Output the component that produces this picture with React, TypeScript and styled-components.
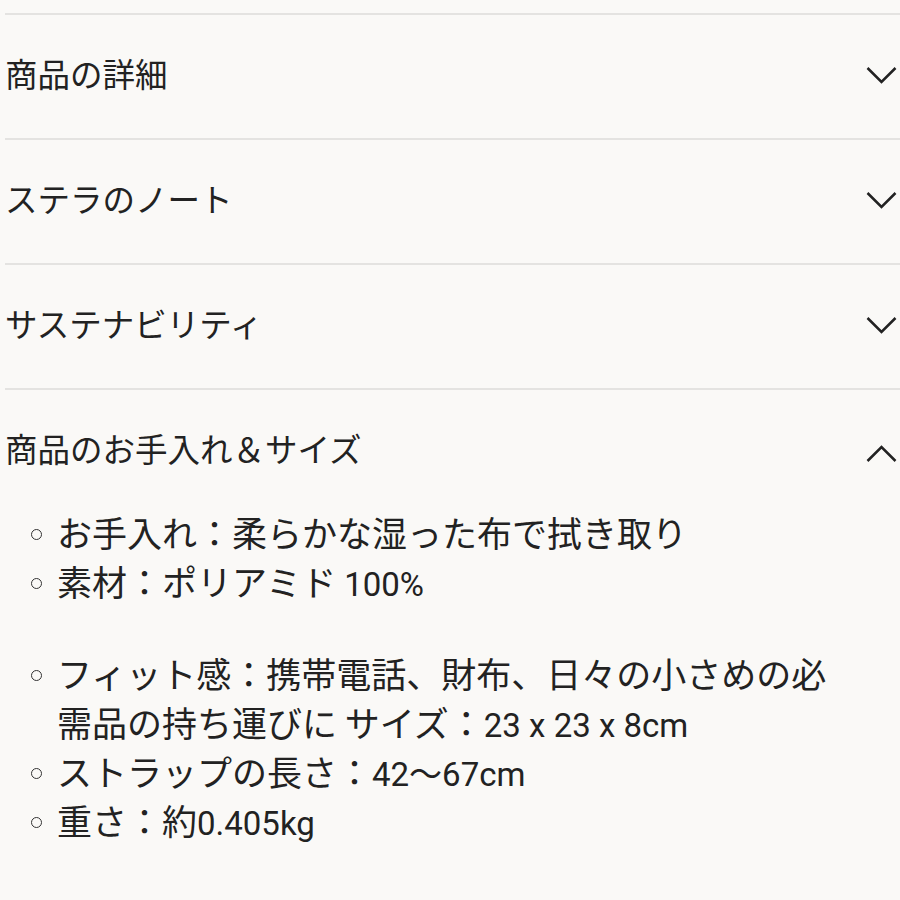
import React from "react";
import styled, { createGlobalStyle } from "styled-components";

interface ISection {
  title: string;
  open?: boolean;
}

const GlobalStyle = createGlobalStyle`
  body {
    margin: 0;
    background-color: #faf9f7;
    color: #222;
    font-family: "Noto Sans CJK JP", sans-serif;
  }
`;

const Page = styled.div`
  padding: 13px 0 0 5px;
`;
const Section = styled.section<{ $open: boolean }>`
  border-top: 2px solid #e4e3e1;
  padding-bottom: ${(p) => (p.$open ? 0 : 3)}px;
`;
const Header = styled.div`
  height: 120px;
  display: flex;
  align-items: center;
  justify-content: space-between;
  padding-right: 3px;
`;
const Title = styled.h3`
  margin: 0 0 3px;
  font-size: 32.5px;
  font-weight: 400;
  line-height: 1;
`;
const Chevron = styled.svg<{ $up: boolean }>`
  width: 31px;
  height: 19px;
  transform: ${(p) => (p.$up ? "rotate(180deg) translateY(-3px)" : "none")};
`;
const List = styled.ul`
  list-style: none;
  margin: -3px 0 0;
  padding: 0 55px 0 0;
`;
const Item = styled.li<{ $spaced?: boolean }>`
  display: flex;
  font-size: 35px;
  line-height: 49px;
  margin-top: ${(p) => (p.$spaced ? 43 : 0)}px;
`;
const Bullet = styled.span`
  flex: 0 0 52px;
  height: 49px;
  display: flex;
  align-items: center;
  justify-content: flex-end;
  padding-right: 15px;
  box-sizing: border-box;

  &::after {
    content: "";
    box-sizing: border-box;
    width: 11px;
    height: 11px;
    margin-top: 6px;
    border: 1.5px solid #333;
    border-radius: 50%;
  }
`;
const Text = styled.span`
  flex: 1;
  min-width: 0;
`;
const Latin = styled.span`
  font-family: Roboto, "Noto Sans CJK JP", sans-serif;
  font-size: 33px;
  line-height: 1;
`;

const sections: ISection[] = [
  { title: "商品の詳細" },
  { title: "ステラのノート" },
  { title: "サステナビリティ" },
  { title: "商品のお手入れ＆サイズ", open: true },
];

const Arrow = ({ up }: { up: boolean }) => (
  <Chevron $up={up} viewBox="0 0 31 19">
    <polyline points="1.5,2 15.5,16 29.5,2" fill="none" stroke="#222" strokeWidth="2.5" />
  </Chevron>
);

const CareList = () => (
  <List>
    <Item>
      <Bullet />
      <Text>お手入れ：柔らかな湿った布で拭き取り</Text>
    </Item>
    <Item>
      <Bullet />
      <Text>
        素材：ポリアミド <Latin>100%</Latin>
      </Text>
    </Item>
    <Item $spaced>
      <Bullet />
      <Text>
        フィット感：携帯電話、財布、日々の小さめの必需品の持ち運びに サイズ：<Latin>23 x 23 x 8cm</Latin>
      </Text>
    </Item>
    <Item>
      <Bullet />
      <Text>
        ストラップの長さ：<Latin>42〜67cm</Latin>
      </Text>
    </Item>
    <Item>
      <Bullet />
      <Text>
        重さ：約<Latin>0.405kg</Latin>
      </Text>
    </Item>
  </List>
);

const App = () => {
  return (
    <>
      <GlobalStyle />
      <Page>
        {sections.map((s) => (
          <Section key={s.title} $open={!!s.open}>
            <Header>
              <Title>{s.title}</Title>
              <Arrow up={!!s.open} />
            </Header>
            {s.open && <CareList />}
          </Section>
        ))}
      </Page>
    </>
  );
};

export default App;
